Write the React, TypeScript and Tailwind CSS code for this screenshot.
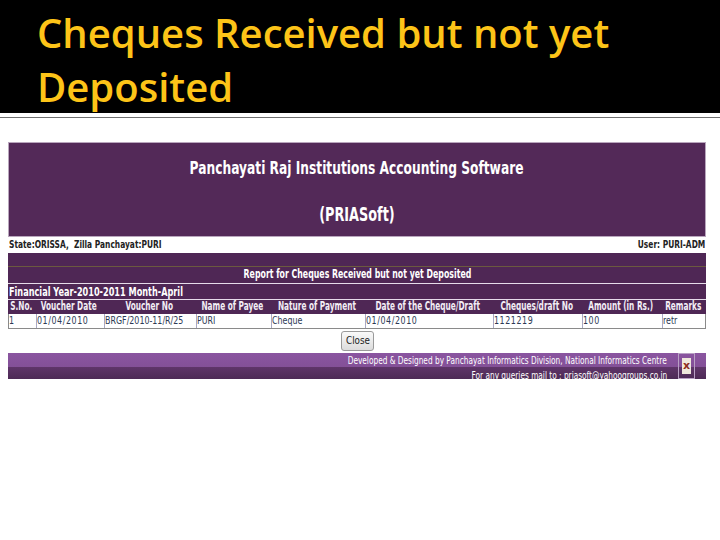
import React from 'react';

const columns = [
    { label: 'S.No.', value: '1', width: 'w-[27px]', numeric: true },
    { label: 'Voucher Date', value: '01/04/2010', width: 'w-[68px]', numeric: true },
    { label: 'Voucher No', value: 'BRGF/2010-11/R/25', width: 'w-[92px]', numeric: false },
    { label: 'Name of Payee', value: 'PURI', width: 'w-[75px]', numeric: false },
    { label: 'Nature of Payment', value: 'Cheque', width: 'w-[94px]', numeric: false },
    { label: 'Date of the Cheque/Draft', value: '01/04/2010', width: 'w-[128px]', numeric: true },
    { label: 'Cheques/draft No', value: '1121219', width: 'w-[89px]', numeric: true },
    { label: 'Amount (in Rs.)', value: '100', width: 'w-[80px]', numeric: true },
    { label: 'Remarks', value: 'retr', width: 'w-[45px]', numeric: false },
];

// the report text in the screenshot is a tall narrow Tahoma, so it gets squeezed horizontally
const squeeze = 'inline-block whitespace-nowrap';

export default function App() {
    return (
        <div className="w-[720px] h-[540px] bg-white overflow-hidden flex flex-col">
            <div className="h-[113px] bg-black pl-[37px] pt-[6px]">
                <h1 className="font-['Open_Sans',sans-serif] font-semibold text-[40px] leading-[54px] text-[#fdc418] w-[640px]">
                    Cheques Received but not yet Deposited
                </h1>
            </div>
            <div className="h-[1px] mt-[4px] bg-[#6f6f6f]" />

            <div className="mt-[24px] ml-[8px] w-[698px] font-['DejaVu_Sans',sans-serif]">
                <div className="h-[95px] bg-[#532958] border border-[#b9a6bd] flex flex-col items-center text-white font-bold text-[18px] leading-[24px] pt-[13px]">
                    <span className={`${squeeze} scale-x-[0.68]`}>Panchayati Raj Institutions Accounting Software</span>
                    <span className={`${squeeze} scale-x-[0.675] text-[19px] mt-[22px]`}>(PRIASoft)</span>
                </div>

                <div className="h-[16px] flex justify-between items-center text-[11px] font-bold text-[#222222] px-[1px]">
                    <span className={`${squeeze} scale-x-[0.68] origin-left`}>State:ORISSA,&nbsp; Zilla Panchayat:PURI</span>
                    <span className={`${squeeze} scale-x-[0.68] origin-right`}>User: PURI-ADM</span>
                </div>

                <div className="h-[14px] bg-[#4f2755] border-b border-[#6b5a3f]" />
                <div className="h-[17px] bg-[#4f2755] border-b border-[#e6dcea] flex items-center justify-center text-[11.5px] font-bold text-white">
                    <span className={`${squeeze} scale-x-[0.68]`}>Report for Cheques Received but not yet Deposited</span>
                </div>
                <div className="h-[16px] bg-[#4f2755] border-b border-[#e6dcea] flex items-center pl-[1px] text-[12px] font-bold text-white">
                    <span className={`${squeeze} scale-x-[0.68] origin-left`}>Financial Year-2010-2011 Month-April</span>
                </div>

                <div className="flex flex-col">
                    <div className="h-[14px] bg-[#4f2755] flex items-center text-[11.5px] font-bold text-[#f3eef5]">
                        {columns.map(c => (
                            <div key={c.label} className={`${c.width} shrink-0 flex justify-center`}>
                                <span className={`${squeeze} scale-x-[0.64]`}>{c.label}</span>
                            </div>
                        ))}
                    </div>
                    <div className="h-[15px] bg-white flex border-b border-l border-r border-[#8a8a8a] text-[11px] text-[#2d3a55]">
                        {columns.map((c, i) => (
                            <div key={c.label} className={`${c.width} shrink-0 leading-[14px] ${i > 0 ? 'border-l border-[#a9a9c4]' : ''}`}>
                                <span className={`${squeeze} scale-x-[0.72] origin-left ${c.numeric ? 'tracking-[0.8px]' : ''}`}>{c.value}</span>
                            </div>
                        ))}
                    </div>
                </div>

                <div className="flex justify-center mt-[2px]">
                    <button className="w-[33px] h-[20px] ml-[1px] rounded-[3px] border border-[#9a9a9a] bg-gradient-to-b from-[#fafafa] to-[#dcdcdc] text-[11px] leading-[17px] text-[#222222] flex justify-center">
                        <span className={`${squeeze} scale-x-[0.8]`}>Close</span>
                    </button>
                </div>

                <div className="mt-[2px] h-[26px] relative overflow-hidden bg-gradient-to-b from-[#8a55a0] to-[#7d4c90] text-[11px] text-white">
                    <div className="absolute left-0 right-0 top-[14px] bottom-0 bg-gradient-to-b from-[#5f3569] to-[#4d2a55]" />
                    <div className="relative h-[14px] pr-[39px] text-right leading-[15px]">
                        <span className={`${squeeze} scale-x-[0.672] origin-right`}>Developed &amp; Designed by Panchayat Informatics Division, National Informatics Centre</span>
                    </div>
                    <div className="relative pr-[39px] text-right leading-[18px]">
                        <span className={`${squeeze} scale-x-[0.672] origin-right`}>For any queries mail to : priasoft@yahoogroups.co.in</span>
                    </div>
                    <div className="absolute right-[11px] top-0 w-[17px] h-[26px] border border-[#b9a0c4] flex items-center justify-center">
                        <span className="w-[9px] h-[16px] bg-[#efe8dc] text-[#8e2d1d] text-[11px] font-bold leading-[15px] text-center">x</span>
                    </div>
                </div>
            </div>
        </div>
    );
}
